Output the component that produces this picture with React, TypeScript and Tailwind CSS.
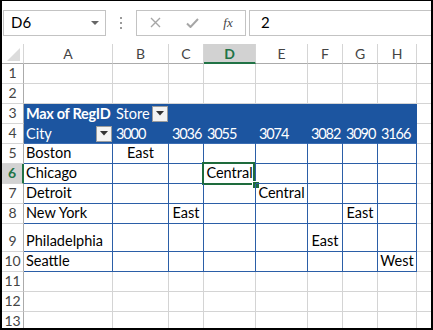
import React from 'react';

const colW = ['w-[89px]', 'w-[56px]', 'w-[35px]', 'w-[52px]', 'w-[52px]', 'w-[35px]', 'w-[35px]', 'w-[39px]'];
const letters = ['A', 'B', 'C', 'D', 'E', 'F', 'G', 'H'];

// pivot body: row -> [col index, text]
const body: Record<number, { city: string; cells: Record<number, string> }> = {
    5: { city: 'Boston', cells: { 1: 'East' } },
    6: { city: 'Chicago', cells: { 3: 'Central' } },
    7: { city: 'Detroit', cells: { 4: 'Central' } },
    8: { city: 'New York', cells: { 2: 'East', 6: 'East' } },
    9: { city: 'Philadelphia', cells: { 5: 'East' } },
    10: { city: 'Seattle', cells: { 7: 'West' } },
};
const stores = ['3000', '3036', '3055', '3074', '3082', '3090', '3166'];

function DropBtn() {
    return (
        <div className="w-[16px] h-[16px] bg-[#f3f3f3] border border-[#9c9c9c] flex items-center justify-center">
            <svg width="8" height="5" viewBox="0 0 8 5">
                <path d="M0 0h8L4 4.5z" fill="#333" />
            </svg>
        </div>
    );
}

function Cell({ row, col }: { row: number; col: number }) {
    const w = colW[col];
    if (row === 3 || row === 4) {
        const border = row === 4 ? 'border-b-[#3b6db3]' : 'border-b-[#1c55a0]';
        let content: React.ReactNode = null;
        if (row === 3 && col === 0) content = <span className="font-bold pl-[2px] tracking-[-0.3px]">Max of RegID</span>;
        if (row === 3 && col === 1)
            content = (
                <div className="flex w-full items-center justify-between pl-[3px]">
                    <span>Store</span>
                    <DropBtn />
                </div>
            );
        if (row === 4 && col === 0)
            content = (
                <div className="flex w-full items-center justify-between pl-[2px]">
                    <span>City</span>
                    <DropBtn />
                </div>
            );
        if (row === 4 && col > 0) content = <span className="pl-[3px] tracking-[-1.1px] relative z-10">{stores[col - 1]}</span>;
        return (
            <div className={`${w} shrink-0 h-full bg-[#1c55a0] text-white border-r border-b border-r-[#1c55a0] ${border} flex items-center whitespace-nowrap`}>
                {content}
            </div>
        );
    }
    if (row >= 5 && row <= 10) {
        const d = body[row];
        const text = col === 0 ? d.city : d.cells[col];
        const selected = row === 6 && col === 3;
        return (
            <div className={`${w} shrink-0 h-full border-r border-b border-[#2b5ea7] flex items-end pb-[1px] whitespace-nowrap relative ${col === 0 ? 'justify-start pl-[2px]' : 'justify-center'}`}>
                {text && <span className="leading-[18px]">{text}</span>}
                {selected && (
                    <>
                        <div className="absolute left-[-2px] top-[-2px] w-[53px] h-[23px] border-2 border-[#1e6b3c]" />
                        <div className="absolute left-[48px] top-[17px] w-[6px] h-[6px] bg-[#1e6b3c] border border-white box-content" />
                    </>
                )}
            </div>
        );
    }
    return <div className={`${w} shrink-0 h-full border-r border-b border-[#d4d4d4]`} />;
}

export default function App() {
    const rows = [1, 2, 3, 4, 5, 6, 7, 8, 9, 10, 11, 12, 13];
    return (
        <div
            className="w-[433px] h-[330px] overflow-hidden bg-white border-t border-l-2 border-r-2 border-b-2 border-black text-[14.5px] text-black flex flex-col"
            style={{ fontFamily: 'Lato, "Open Sans", sans-serif' }}>
            {/* formula bar */}
            <div className="h-[43px] shrink-0 flex items-center pl-[1px]">
                <div className="w-[103px] h-[26px] border border-[#c3c3c3] flex items-center justify-between pl-[7px] pr-[6px]">
                    <span className="text-[15px]">D6</span>
                    <svg width="8" height="4" viewBox="0 0 8 4">
                        <path d="M0 0h8L4 4z" fill="#666" />
                    </svg>
                </div>
                <div className="w-[30px] flex flex-col items-center gap-[3px]">
                    <div className="w-[2px] h-[2px] bg-[#9a9a9a]" />
                    <div className="w-[2px] h-[2px] bg-[#9a9a9a]" />
                    <div className="w-[2px] h-[2px] bg-[#9a9a9a]" />
                </div>
                <div className="w-[110px] h-[26px] border border-[#c3c3c3] flex items-center">
                    <div className="w-[36px] flex justify-center">
                        <svg width="11" height="11" viewBox="0 0 11 11">
                            <path d="M1 1l9 9M10 1l-9 9" stroke="#a6a6a6" strokeWidth="1.4" fill="none" />
                        </svg>
                    </div>
                    <div className="w-[38px] flex justify-center">
                        <svg width="13" height="10" viewBox="0 0 13 10">
                            <path d="M1 5.5l3.5 3.5L12 1" stroke="#a6a6a6" strokeWidth="2" fill="none" />
                        </svg>
                    </div>
                    <div className="flex-1 flex justify-center">
                        <span className="italic text-[13px] text-[#444]" style={{ fontFamily: '"Liberation Serif", serif' }}>
                            fx
                        </span>
                    </div>
                </div>
                <div className="flex-1 h-[26px] ml-[3px] border border-r-0 border-[#c3c3c3] flex items-center pl-[11px]">
                    <span className="text-[15px]">2</span>
                </div>
            </div>

            {/* column headers */}
            <div className="h-[20px] shrink-0 flex text-[14px] text-[#444]">
                <div className="w-[22px] shrink-0 h-full border-r border-b border-r-[#d5d5d5] border-b-[#ababab] flex items-end justify-end">
                    <svg width="14" height="14" viewBox="0 0 14 14" className="mb-[1px] mr-[2px]">
                        <path d="M13 0v13H0z" fill="#dcdcdc" />
                    </svg>
                </div>
                {letters.map((l, i) => (
                    <div
                        key={l}
                        className={`${colW[i]} shrink-0 h-full border-r border-r-[#d5d5d5] flex items-center justify-center ${
                            i === 3 ? 'bg-[#d2d2d2] border-b-2 border-b-[#217346] text-[#217346] font-bold' : 'border-b border-b-[#ababab]'
                        }`}>
                        {l}
                    </div>
                ))}
                <div className="flex-1 h-full border-b border-[#ababab]" />
            </div>

            {/* rows */}
            {rows.map(r => (
                <div key={r} className={`${r === 9 ? 'h-[28px]' : 'h-[20px]'} shrink-0 flex`}>
                    <div
                        className={`w-[22px] shrink-0 h-full border-b border-b-[#d5d5d5] flex items-end justify-center pb-[1px] text-[14px] leading-[18px] ${
                            r === 6 ? 'bg-[#d2d2d2] border-r-2 border-r-[#217346] text-[#217346] font-bold' : 'border-r border-r-[#ababab] text-[#444]'
                        }`}>
                        {r}
                    </div>
                    {letters.map((_, c) => (
                        <Cell key={c} row={r} col={c} />
                    ))}
                    <div className="flex-1 h-full border-b border-[#d4d4d4]" />
                </div>
            ))}
        </div>
    );
}
